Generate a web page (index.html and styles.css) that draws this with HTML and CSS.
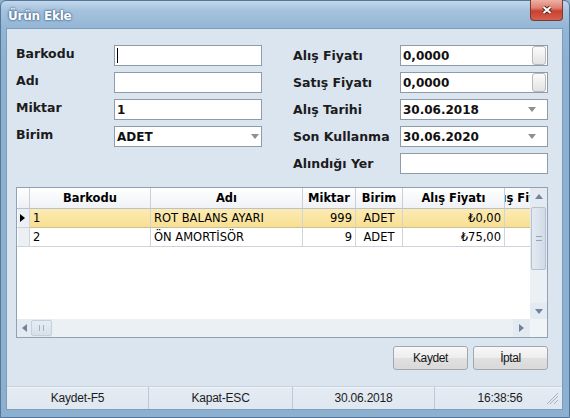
FILE: index.html
```html
<!DOCTYPE html>
<html lang="tr">
<head>
<meta charset="utf-8">
<title>Ürün Ekle</title>
<link rel="stylesheet" href="styles.css">
</head>
<body>
<div class="window">
  <div class="titlebar">
    <span class="title">Ürün Ekle</span>
    <div class="close">
      <svg width="12" height="10" viewBox="0 0 12 10"><path d="M2.5 2 L9.5 8 M9.5 2 L2.5 8" stroke="#5b2520" stroke-width="4"/><path d="M2.5 2 L9.5 8 M9.5 2 L2.5 8" stroke="#ffffff" stroke-width="2"/></svg>
    </div>
  </div>
  <div class="client">
    <div class="form">
      <div class="fcol fcol-left">
        <span class="lbl">Barkodu</span>
        <div class="field"><span class="caret"></span></div>
        <span class="lbl">Adı</span>
        <div class="field"></div>
        <span class="lbl">Miktar</span>
        <div class="field">1</div>
        <span class="lbl">Birim</span>
        <div class="field combo combo-narrow">ADET<svg class="drop" width="8" height="5" viewBox="0 0 8 5"><path d="M0 0 H8 L4 5 Z" fill="#8f8f8f"/></svg></div>
      </div>
      <div class="fcol fcol-right">
        <span class="lbl">Alış Fiyatı</span>
        <div class="field">0,0000<span class="spin"></span></div>
        <span class="lbl">Satış Fiyatı</span>
        <div class="field">0,0000<span class="spin"></span></div>
        <span class="lbl">Alış Tarihi</span>
        <div class="field combo combo-wide">30.06.2018<svg class="drop" width="8" height="5" viewBox="0 0 8 5"><path d="M0 0 H8 L4 5 Z" fill="#8f8f8f"/></svg></div>
        <span class="lbl">Son Kullanma</span>
        <div class="field combo combo-wide">30.06.2020<svg class="drop" width="8" height="5" viewBox="0 0 8 5"><path d="M0 0 H8 L4 5 Z" fill="#8f8f8f"/></svg></div>
        <span class="lbl">Alındığı Yer</span>
        <div class="field"></div>
      </div>
    </div>

    <div class="grid">
      <div class="grid-data">
        <div class="row head">
          <div class="c ind"></div>
          <div class="c w-bar center">Barkodu</div>
          <div class="c w-adi center">Adı</div>
          <div class="c w-mik center">Miktar</div>
          <div class="c w-bir center">Birim</div>
          <div class="c w-alis center">Alış Fiyatı</div>
          <div class="c w-sat"><span class="clip">Satış Fiyatı</span></div>
        </div>
        <div class="row sel">
          <div class="c ind"><svg width="5" height="8" viewBox="0 0 5 8"><path d="M0 0 L5 4 L0 8 Z" fill="#000"/></svg></div>
          <div class="c w-bar">1</div>
          <div class="c w-adi">ROT BALANS AYARI</div>
          <div class="c w-mik right">999</div>
          <div class="c w-bir center">ADET</div>
          <div class="c w-alis right">₺0,00</div>
          <div class="c w-sat"></div>
        </div>
        <div class="row">
          <div class="c ind"></div>
          <div class="c w-bar">2</div>
          <div class="c w-adi">ÖN AMORTİSÖR</div>
          <div class="c w-mik right">9</div>
          <div class="c w-bir center">ADET</div>
          <div class="c w-alis right">₺75,00</div>
          <div class="c w-sat"></div>
        </div>
      </div>
      <div class="vscroll">
        <div class="sb-btn sb-up"><svg width="8" height="5" viewBox="0 0 8 5"><path d="M0 5 H8 L4 0 Z" fill="#71839a"/></svg></div>
        <div class="vthumb"><span class="vgrip"></span></div>
        <div class="sb-track"></div>
        <div class="sb-btn sb-down"><svg width="8" height="5" viewBox="0 0 8 5"><path d="M0 0 H8 L4 5 Z" fill="#71839a"/></svg></div>
      </div>
      <div class="hscroll">
        <div class="sb-btn sb-left"><svg width="5" height="8" viewBox="0 0 5 8"><path d="M5 0 V8 L0 4 Z" fill="#71839a"/></svg></div>
        <div class="hthumb"><span class="hgrip"></span></div>
        <div class="sb-track"></div>
        <div class="sb-btn sb-right"><svg width="5" height="8" viewBox="0 0 5 8"><path d="M0 0 V8 L5 4 Z" fill="#71839a"/></svg></div>
      </div>
      <div class="corner"></div>
    </div>

    <div class="actions">
      <button class="btn">Kaydet</button>
      <button class="btn">İptal</button>
    </div>

    <div class="statusbar">
      <div class="sp sp1">Kaydet-F5</div>
      <div class="sp sp2">Kapat-ESC</div>
      <div class="sp sp3">30.06.2018</div>
      <div class="sp sp4">16:38:56
        <svg class="grip" width="12" height="12" viewBox="0 0 12 12"><path d="M11 3 L3 11 M11 7 L7 11 M11 0 L0 11" stroke="#a6b3c1" stroke-width="1"/></svg>
      </div>
    </div>
  </div>
</div>
</body>
</html>
```
FILE: styles.css
```css
html, body {
  margin: 0;
  padding: 0;
}
body {
  width: 570px;
  height: 418px;
  overflow: hidden;
  font-family: "DejaVu Sans", sans-serif;
  background: #8db1d1;
}
.window {
  width: 570px;
  height: 418px;
  box-sizing: border-box;
  border: 1px solid #56769a;
  border-radius: 6px 6px 0 0;
  background: linear-gradient(#c2d7ec 0px, #a6c3de 9px, #93b6d5 27px, #8cb0d0 60px, #8cb0d0 100%);
  display: flex;
  flex-direction: column;
}
.titlebar {
  height: 27px;
  flex: none;
  display: flex;
  align-items: flex-start;
  padding: 0 6px 0 7px;
}
.title {
  margin-top: 8px;
  line-height: 15px;
  font-family: "DejaVu Sans", sans-serif;
  font-weight: bold;
  font-size: 12px;
  letter-spacing: -0.2px;
  color: #ffffff;
  text-shadow: 0 0 2px #3f6388, 0 0 3px #5a7ea3, 0 0 1px #3f6388;
}
.close {
  margin-left: auto;
  margin-top: -1px;
  width: 33px;
  height: 21px;
  box-sizing: border-box;
  border: 1px solid #7a3a33;
  border-top: none;
  border-radius: 0 0 4px 4px;
  background: linear-gradient(#eeb0a4 0%, #de8070 40%, #c9402f 55%, #d4604d 100%);
  display: flex;
  align-items: center;
  justify-content: center;
}
.client {
  flex: 1;
  margin: 0 6px 7px 5px;
  border: 1px solid #7e9cba;
  background: #dbe5f0;
  display: flex;
  flex-direction: column;
  min-height: 0;
}

/* ---------- form ---------- */
.form {
  display: flex;
  gap: 31px;
  padding: 16px 0 0 9px;
}
.fcol {
  display: grid;
  grid-auto-rows: 21px;
  row-gap: 6px;
  align-items: center;
}
.fcol-left { grid-template-columns: 98px 148px; }
.fcol-right { grid-template-columns: 107px 148px; }
.lbl {
  font-weight: bold;
  font-size: 12.5px;
  color: #1c1c1c;
  white-space: nowrap;
}
.fcol-left .lbl {
  align-self: start;
  line-height: 17px;
}
.field {
  height: 21px;
  box-sizing: border-box;
  border: 1px solid #8d9bab;
  background: #ffffff;
  display: flex;
  align-items: center;
  padding-left: 2px;
  font-weight: bold;
  font-size: 12px;
  color: #111;
  white-space: nowrap;
}
.caret {
  width: 1px;
  height: 15px;
  background: #000;
}
.drop { margin-left: auto; flex: none; }
.combo-narrow .drop { margin-right: 2px; }
.combo-wide .drop { margin-right: 11px; }
.spin {
  margin-left: auto;
  margin-right: 1px;
  width: 14px;
  height: 19px;
  box-sizing: border-box;
  border: 1px solid #b8b8b8;
  border-radius: 3px;
  background: linear-gradient(#fbfbfb, #e3e3e3);
}

/* ---------- grid ---------- */
.grid {
  margin: 13px 0 0 9px;
  width: 532px;
  height: 151px;
  box-sizing: border-box;
  border: 1px solid #91a1b3;
  background: #ffffff;
  display: grid;
  grid-template-columns: 513px 17px;
  grid-template-rows: 131px 18px;
}
.grid-data {
  overflow: hidden;
  background: #ffffff;
}
.row {
  display: flex;
  height: 19px;
  font-size: 11.5px;
  color: #000;
}
.row.head {
  height: 21px;
  font-weight: bold;
  background: linear-gradient(#ffffff, #eef1f5);
}
.c {
  flex: none;
  box-sizing: border-box;
  border-right: 1px solid #cfd4db;
  border-bottom: 1px solid #cfd4db;
  overflow: hidden;
  white-space: nowrap;
  display: flex;
  align-items: center;
  padding: 0 3px;
}
.head .c { border-bottom-color: #b9c1cc; border-right-color: #c9cfd7; }
.ind {
  width: 13px;
  padding: 0 0 0 3px;
  background: #eceff4;
  box-shadow: inset 1px 0 #ffffff;
}
.head .ind { background: linear-gradient(#ffffff, #eceff3); }
.w-bar { width: 121px; }
.w-adi { width: 152px; }
.w-mik { width: 53px; }
.w-bir { width: 47px; }
.w-alis { width: 102px; }
.w-sat { width: 100px; padding: 0; }
.center { justify-content: center; }
.right { justify-content: flex-end; }
.clip { margin-left: -24px; }
.row.sel .c:not(.ind) {
  background: linear-gradient(#fcebb3, #f8df92);
  border-bottom-color: #cdbf98;
}
.row.sel .ind { border-bottom-color: #cfd4db; }

/* ---------- scrollbars ---------- */
.vscroll {
  grid-column: 2;
  grid-row: 1;
  background: #e4eaf1;
  display: flex;
  flex-direction: column;
  align-items: center;
}
.sb-btn {
  flex: none;
  display: flex;
  align-items: center;
  justify-content: center;
}
.sb-up { height: 17px; width: 17px; }
.sb-down { height: 16px; width: 17px; }
.vthumb {
  margin-top: 2px;
  width: 15px;
  height: 63px;
  box-sizing: border-box;
  border: 1px solid #b3c1d0;
  border-radius: 2px;
  background: linear-gradient(to right, #e4eaf2, #d0dbe7);
  display: flex;
  align-items: center;
  justify-content: center;
}
.vgrip {
  width: 6px;
  height: 3px;
  border-top: 1px solid #93a4b8;
  border-bottom: 1px solid #93a4b8;
}
.sb-track {
  flex: 1;
  align-self: stretch;
  background: #ebf0f5;
}
.hscroll {
  grid-column: 1;
  grid-row: 2;
  background: #e4eaf1;
  display: flex;
  align-items: center;
}
.sb-left { width: 14px; height: 18px; }
.sb-right { width: 16px; height: 18px; margin-right: 1px; }
.hthumb {
  width: 21px;
  height: 16px;
  box-sizing: border-box;
  border: 1px solid #c4cfdb;
  border-radius: 2px;
  background: linear-gradient(#e6ecf3, #d7e0ea);
  display: flex;
  align-items: center;
  justify-content: center;
}
.hgrip {
  width: 3px;
  height: 6px;
  border-left: 1px solid #a2b1c2;
  border-right: 1px solid #a2b1c2;
}
.corner {
  grid-column: 2;
  grid-row: 2;
  background: #f1f4f7;
}

/* ---------- buttons ---------- */
.actions {
  display: flex;
  justify-content: flex-end;
  gap: 5px;
  margin-top: 8px;
  padding-right: 14px;
}
.btn {
  width: 75px;
  height: 24px;
  box-sizing: border-box;
  padding: 0;
  border: 1px solid #a2a8af;
  border-radius: 3px;
  background: linear-gradient(#f8f8f8 0%, #ededed 48%, #e0e0e0 52%, #d9d9d9 100%);
  font-family: "Liberation Sans", sans-serif;
  font-size: 12px;
  letter-spacing: -0.4px;
  color: #151515;
}

/* ---------- status bar ---------- */
.statusbar {
  margin-top: auto;
  height: 23px;
  flex: none;
  box-sizing: border-box;
  border-top: 1px solid #c6d2df;
  background: linear-gradient(#e4ebf3, #dfe7f0);
  box-shadow: inset 0 1px #f2f6fa;
  display: flex;
}
.sp {
  display: flex;
  align-items: center;
  justify-content: center;
  font-family: "Liberation Sans", sans-serif;
  font-size: 12px;
  letter-spacing: -0.2px;
  color: #1c1c1c;
  box-sizing: border-box;
}
.sp1 { width: 142px; border-right: 1px solid #bcc8d5; }
.sp2 { width: 144px; border-right: 1px solid #bcc8d5; }
.sp3 { width: 142px; border-right: 1px solid #bcc8d5; }
.sp4 { flex: 1; position: relative; padding-left: 3px; }
.grip {
  position: absolute;
  right: 3px;
  bottom: 4px;
}
```
